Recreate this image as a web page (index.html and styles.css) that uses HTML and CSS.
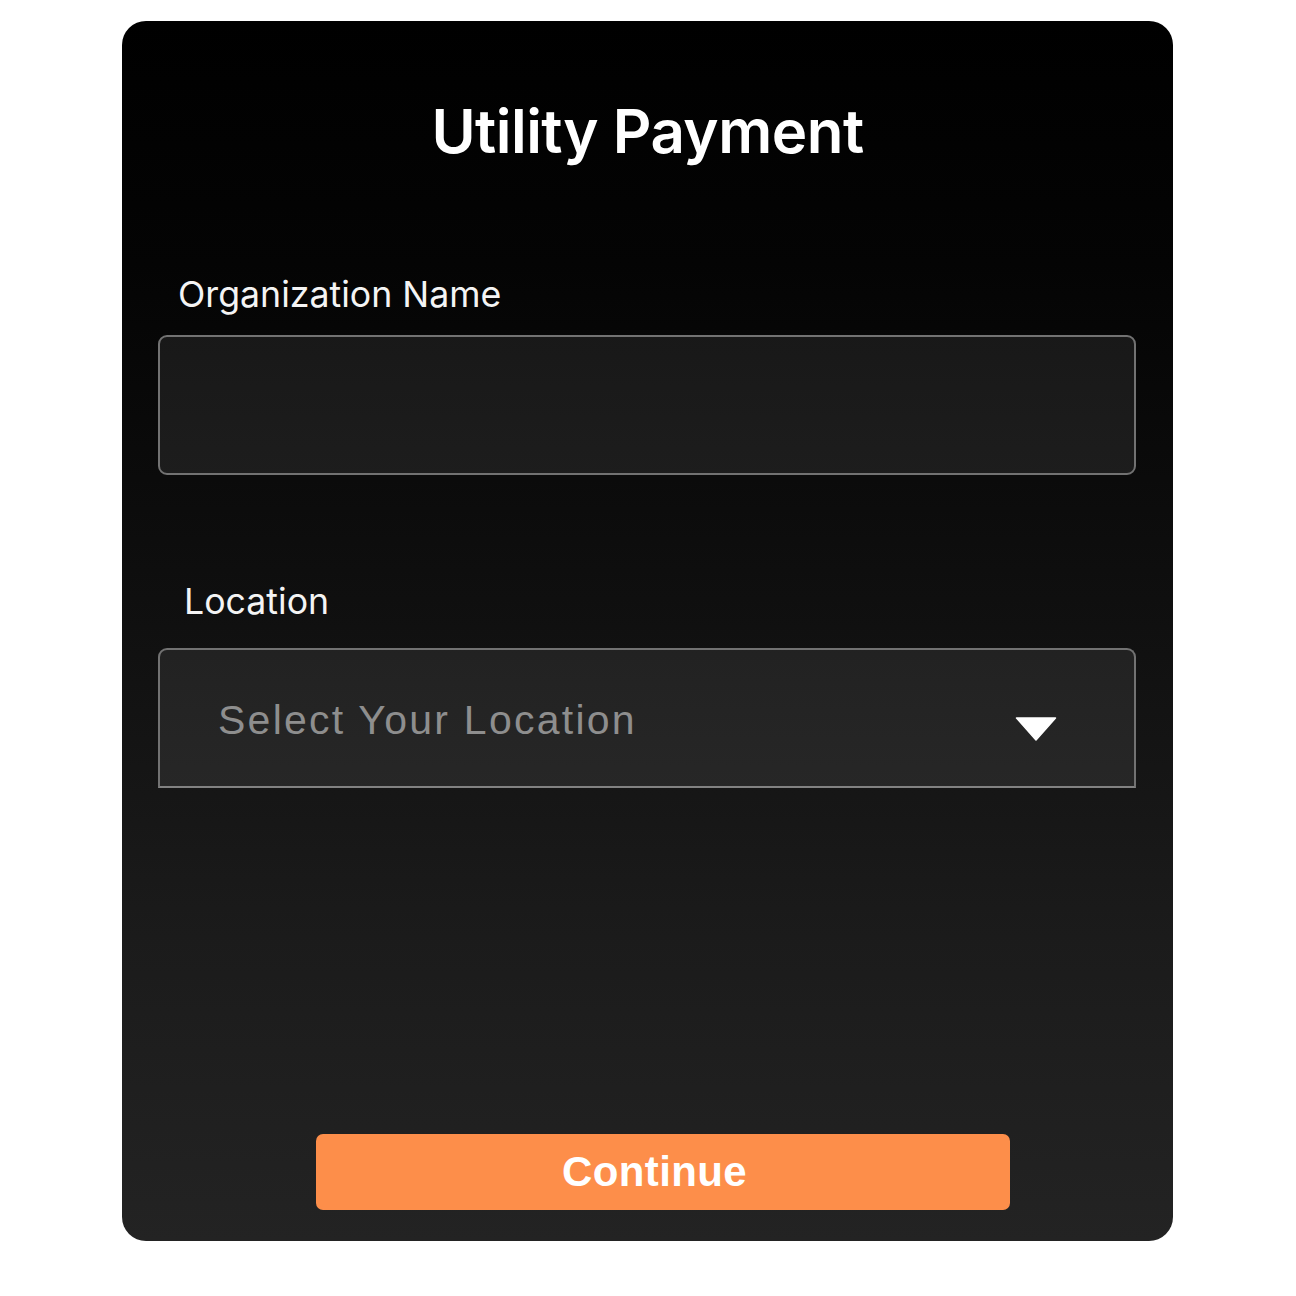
FILE: index.html
```html
<!DOCTYPE html>
<html lang="en">
<head>
<meta charset="utf-8">
<title>Utility Payment</title>
<link rel="stylesheet" href="styles.css">
</head>
<body>
<main class="card">
  <h1 class="title">Utility Payment</h1>
  <label class="label label-org" for="org">Organization Name</label>
  <input class="field field-org" id="org" type="text">
  <label class="label label-loc">Location</label>
  <div class="field field-loc">
    <span class="placeholder">Select Your Location</span>
    <svg class="caret" width="42" height="24" viewBox="0 0 42 24" aria-hidden="true">
      <path d="M1.5 1 H40.5 L21 23 Z" fill="#ffffff" stroke="#ffffff" stroke-width="1.5" stroke-linejoin="round"/>
    </svg>
  </div>
  <button class="continue" type="button">Continue</button>
</main>
</body>
</html>
```

FILE: styles.css
```css
html, body {
  margin: 0;
  padding: 0;
  background: #ffffff;
}

body {
  padding: 21px 0 0 122px;
}

.card {
  box-sizing: border-box;
  width: 1051px;
  height: 1220px;
  border-radius: 24px;
  background: linear-gradient(180deg, #000000 0%, #040404 20%, #0e0e0e 45%, #1b1b1b 75%, #232323 100%);
  padding: 80px 36px 31px 36px;
  display: flex;
  flex-direction: column;
  font-family: Inter, "Noto Sans", sans-serif;
  color: #ffffff;
}

.title {
  margin: 0;
  text-align: center;
  font-size: 60px;
  line-height: 60px;
  font-weight: 600;
  letter-spacing: -0.5px;
}

.label {
  display: block;
  font-size: 35.7px;
  line-height: 36px;
  font-weight: 400;
  color: #f4f4f4;
}

.label-org {
  margin: 115px 0 0 20px;
}

.label-loc {
  margin: 108px 0 0 26px;
}

.field {
  box-sizing: border-box;
  width: 978px;
  height: 140px;
  border: 2px solid #727272;
  background: rgba(255, 255, 255, 0.075);
  margin: 0;
}

.field-org {
  display: block;
  margin-top: 23px;
  border-radius: 9px;
  outline: none;
}

.field-loc {
  margin-top: 29px;
  border-radius: 9px 9px 0 0;
  border-bottom-color: #828282;
  display: flex;
  align-items: center;
  justify-content: space-between;
  padding: 0 77px 0 58px;
}

.placeholder {
  font-family: "Liberation Sans", Arial, sans-serif;
  font-size: 41px;
  letter-spacing: 2.25px;
  color: #8e8e8e;
  margin-top: 4px;
}

.caret {
  display: block;
  margin-top: 21px;
}

.continue {
  margin: auto 0 0 158px;
  width: 694px;
  height: 76px;
  border: none;
  border-radius: 7px;
  background: #fd8e4a;
  color: #ffffff;
  font-family: "Liberation Sans", Arial, sans-serif;
  font-weight: 700;
  font-size: 42px;
  letter-spacing: 0.4px;
  padding: 0 17px 0 0;
}
```
